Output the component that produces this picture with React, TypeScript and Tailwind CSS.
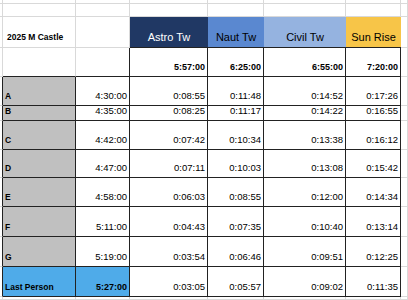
import React from 'react'

// column widths in px: gutter, label, start, astro, naut, civil, sunrise, tail
const cols = [3, 73, 54, 78, 56, 82, 55, 7]

type Row = {
  label: string
  start: string
  vals: string[]
  h: number
  last?: boolean
}

const rows: Row[] = [
  { label: 'A', start: '4:30:00', vals: ['0:08:55', '0:11:48', '0:14:52', '0:17:26'], h: 29 },
  { label: 'B', start: '4:35:00', vals: ['0:08:25', '0:11:17', '0:14:22', '0:16:55'], h: 15 },
  { label: 'C', start: '4:42:00', vals: ['0:07:42', '0:10:34', '0:13:38', '0:16:12'], h: 29 },
  { label: 'D', start: '4:47:00', vals: ['0:07:11', '0:10:03', '0:13:08', '0:15:42'], h: 28 },
  { label: 'E', start: '4:58:00', vals: ['0:06:03', '0:08:55', '0:12:00', '0:14:34'], h: 29 },
  { label: 'F', start: '5:11:00', vals: ['0:04:43', '0:07:35', '0:10:40', '0:13:14'], h: 30 },
  { label: 'G', start: '5:19:00', vals: ['0:03:54', '0:06:46', '0:09:51', '0:12:25'], h: 30 },
  { label: 'Last Person', start: '5:27:00', vals: ['0:03:05', '0:05:57', '0:09:02', '0:11:35'], h: 30, last: true },
]

const headers = [
  { name: 'Astro Tw', cls: 'bg-[#203864] text-white' },
  { name: 'Naut Tw', cls: 'bg-[#5a88d0] text-black' },
  { name: 'Civil Tw', cls: 'bg-[#95b3e0] text-black' },
  { name: 'Sun Rise', cls: 'bg-[#f7c548] text-black' },
]

const targets = ['5:57:00', '6:25:00', '6:55:00', '7:20:00']

const light = 'border-[#d9d9d9]'
const dark = 'border-[#222]'

function Cell({ w, className = '', children }: { w: number; className?: string; children?: React.ReactNode }) {
  return (
    <div className={`shrink-0 h-full flex items-end border-r border-b ${className}`} style={{ width: w }}>
      {children}
    </div>
  )
}

function BlankRow({ h }: { h: number }) {
  return (
    <div className="flex" style={{ height: h }}>
      {cols.map((w, i) => (
        <Cell key={i} w={w} className={light} />
      ))}
    </div>
  )
}

export default function App() {
  return (
    <div className="w-[408px] h-[300px] overflow-hidden bg-white font-['Liberation_Sans',Arial,sans-serif] text-black">
      <BlankRow h={4} />
      <BlankRow h={13} />

      {/* header row */}
      <div className="flex h-[31px]">
        <Cell w={cols[0]} className={light} />
        <Cell w={cols[1]} className={`${light} pl-[4px] pb-[3px] text-[8.5px] font-bold`}>
          2025 M Castle
        </Cell>
        <Cell w={cols[2]} className={light} />
        {headers.map((h, i) => (
          <div
            key={h.name}
            className={`shrink-0 h-full flex items-end justify-center pb-[2px] border-b ${dark} ${h.cls} text-[11px] pt-[1px]`}
            style={{ width: cols[i + 3] }}
          >
            {h.name}
          </div>
        ))}
        <Cell w={cols[7]} className={light} />
      </div>

      {/* target times */}
      <div className="flex h-[29px]">
        <Cell w={cols[0]} className={light} />
        <Cell w={cols[1]} className={`border-r-[#d9d9d9] ${dark}`} />
        <Cell w={cols[2]} className={dark} />
        {targets.map((t, i) => (
          <Cell key={t} w={cols[i + 3]} className={`${dark} justify-end pr-[2px] pb-[2px] text-[9px] font-bold`}>
            {t}
          </Cell>
        ))}
        <Cell w={cols[7]} className={light} />
      </div>

      {rows.map((r) => (
        <div key={r.label} className="flex" style={{ height: r.h }}>
          <Cell w={cols[0]} className={`border-r-[#222] border-b-[#d9d9d9]`} />
          <Cell
            w={cols[1]}
            className={`${dark} ${r.last ? 'bg-[#4fabe9]' : 'bg-[#c0c0c0]'} pl-[2px] pb-[2px] text-[8.5px] font-bold`}
          >
            {r.label}
          </Cell>
          <Cell
            w={cols[2]}
            className={`${dark} justify-end pr-[2px] pb-[2px] ${r.last ? 'bg-[#4fabe9] font-bold text-[9px]' : 'text-[9.5px]'}`}
          >
            {r.start}
          </Cell>
          {r.vals.map((v, i) => (
            <Cell key={i} w={cols[i + 3]} className={`${dark} justify-end pr-[2px] pb-[2px] text-[9.5px]`}>
              {v}
            </Cell>
          ))}
          <Cell w={cols[7]} className={light} />
        </div>
      ))}

      <BlankRow h={3} />
    </div>
  )
}
